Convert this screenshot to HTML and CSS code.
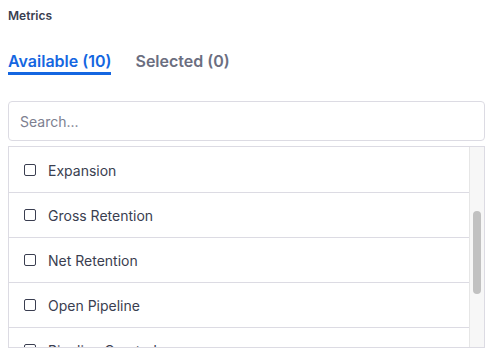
FILE: index.html
```html
<!DOCTYPE html>
<html>
<head>
<meta charset="utf-8">
<link rel="stylesheet" href="styles.css">
</head>
<body>
<div class="panel">
  <div class="label">Metrics</div>
  <div class="tabs">
    <div class="tab active">Available (10)</div>
    <div class="tab">Selected (0)</div>
  </div>
  <input class="search" type="text" placeholder="Search...">
  <div class="list">
    <div class="rows">
      <label class="row"><span class="box"></span><span class="name">Expansion</span></label>
      <label class="row"><span class="box"></span><span class="name">Gross Retention</span></label>
      <label class="row"><span class="box"></span><span class="name">Net Retention</span></label>
      <label class="row"><span class="box"></span><span class="name">Open Pipeline</span></label>
      <label class="row"><span class="box"></span><span class="name">Pipeline Created</span></label>
    </div>
    <div class="scrollbar"><div class="thumb"></div></div>
  </div>
</div>
</body>
</html>
```
FILE: styles.css
```css
* { box-sizing: border-box; }
body {
  margin: 8px;
  background: #fff;
  font-family: "Inter", "Roboto", sans-serif;
  color: #3a3e50;
}
.label {
  font-size: 12px;
  line-height: 16px;
  font-weight: 600;
  color: #3a3e50;
}
.tabs {
  display: flex;
  gap: 24px;
  margin-top: 27px;
}
.tab {
  font-size: 16px;
  line-height: 20px;
  font-weight: 600;
  color: #6b6e80;
  padding-bottom: 1px;
  border-bottom: 3px solid transparent;
}
.tab.active {
  color: #1466e1;
  border-bottom-color: #1466e1;
}
.search {
  display: block;
  width: 100%;
  height: 40px;
  margin-top: 26px;
  padding: 0 11px;
  border: 1px solid #dcdbe3;
  border-radius: 4px;
  font-family: inherit;
  font-size: 14px;
  color: #3a3e50;
  outline: none;
}
.search::placeholder { color: #7d8090; }
.list {
  position: relative;
  margin-top: 5px;
  height: 202px;
  border: 1px solid #dcdbe3;
  overflow: hidden;
}
.rows {
  padding-top: 1px;
  margin-right: 15px;
}
.row {
  display: flex;
  align-items: center;
  gap: 12px;
  height: 45px;
  padding-left: 15px;
  border-bottom: 1px solid #dcdbe3;
  font-size: 14px;
}
.box {
  width: 12px;
  height: 12px;
  border: 1.5px solid #3a3e50;
  border-radius: 2px;
}
.scrollbar {
  position: absolute;
  top: 0;
  right: 0;
  bottom: 0;
  width: 15px;
  background: #f7f7f7;
  border-left: 1px solid #e6e6e6;
}
.thumb {
  position: absolute;
  left: 3px;
  width: 8px;
  top: 64px;
  height: 83px;
  border-radius: 4px;
  background: #c1c1c1;
}
```
